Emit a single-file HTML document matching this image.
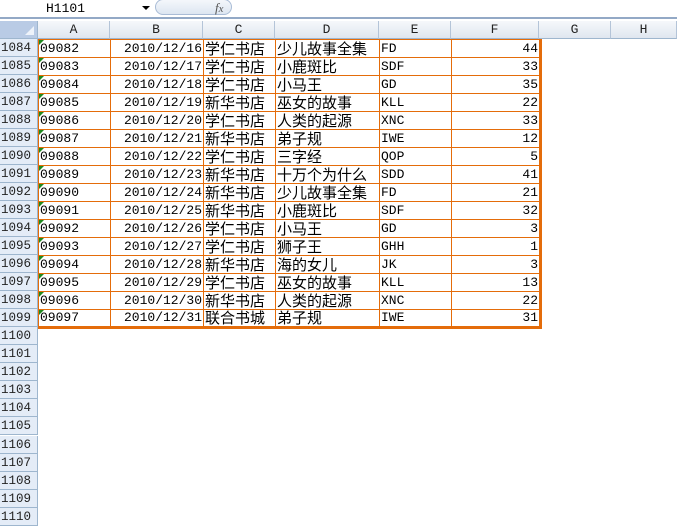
<!DOCTYPE html>
<html><head><meta charset="utf-8"><style>
*{margin:0;padding:0;box-sizing:border-box}
body{width:677px;height:524px;overflow:hidden;background:#fff;position:relative;font-family:"Liberation Mono","Noto Serif CJK SC",monospace;font-size:13px;color:#000}
.fb{position:absolute;left:0;top:0;width:677px;height:17px;background:#fff}
.nm{position:absolute;left:46px;top:1px;font-size:13px}
.arr{position:absolute;left:142px;top:6px;width:0;height:0;border-left:4px solid transparent;border-right:4px solid transparent;border-top:4px solid #000}
.pill{position:absolute;left:155px;top:-1px;width:77px;height:16px;border:1px solid #a9bcd6;border-radius:8px;background:linear-gradient(#f4f7fb,#dde6f1)}
.fx{position:absolute;left:215px;top:0px;font-family:"Liberation Serif",serif;font-style:italic;font-size:13px;color:#555}
.l1{position:absolute;left:0;top:17px;width:677px;height:2px;background:#93a9c6}
.hdr{position:absolute;top:21px;height:18px;background:linear-gradient(#f6f8fb,#dfe6ef);border-right:1px solid #b4c4d8;border-bottom:1px solid #9eb6ce;text-align:center;line-height:18px;color:#222}
.corner{position:absolute;left:0;top:21px;width:38px;height:18px;background:#b9cbe5;border-right:1px solid #9eb6ce;border-bottom:1px solid #9eb6ce}
.rh{position:absolute;left:0;width:38px;height:18px;background:#e4ecf7;border-right:1px solid #9eb6ce;border-bottom:1px solid #9eb6ce;font-size:12.5px;line-height:18px;color:#222;padding-left:1px}
table{position:absolute;left:38px;top:39px;border-collapse:collapse;table-layout:fixed}
td{height:18px;border:1px solid #e46c0a;line-height:16px;white-space:nowrap;overflow:hidden;padding:0 1px;vertical-align:middle}
td.c{font-size:15px;font-family:"Noto Sans CJK SC","Liberation Sans",sans-serif;line-height:16px}
td.r{text-align:right}
td.a{position:relative}
td.a:before{content:"";position:absolute;left:0;top:0;border-top:5px solid #1f8a1f;border-right:5px solid transparent}
tr td:last-child{border-right:3px solid #e46c0a}
tr:last-child td{border-bottom:3px solid #e46c0a}
</style></head><body>
<div class="fb"><span class="nm">H1101</span><div class="arr"></div><div class="pill"></div><span class="fx">f<small>x</small></span></div>
<div class="l1"></div>
<div class="corner"><div style="position:absolute;right:3px;bottom:3px;width:0;height:0;border-left:9px solid transparent;border-bottom:9px solid #eef3fa"></div></div>
<div class="hdr" style="left:38px;width:72px">A</div>
<div class="hdr" style="left:110px;width:93px">B</div>
<div class="hdr" style="left:203px;width:72px">C</div>
<div class="hdr" style="left:275px;width:104px">D</div>
<div class="hdr" style="left:379px;width:72px">E</div>
<div class="hdr" style="left:451px;width:88px">F</div>
<div class="hdr" style="left:539px;width:72px">G</div>
<div class="hdr" style="left:611px;width:66px">H</div>
<div class="rh" style="top:39px">1084</div><div class="rh" style="top:57px">1085</div><div class="rh" style="top:75px">1086</div><div class="rh" style="top:93px">1087</div><div class="rh" style="top:111px">1088</div><div class="rh" style="top:129px">1089</div><div class="rh" style="top:147px">1090</div><div class="rh" style="top:165px">1091</div><div class="rh" style="top:183px">1092</div><div class="rh" style="top:201px">1093</div><div class="rh" style="top:219px">1094</div><div class="rh" style="top:237px">1095</div><div class="rh" style="top:255px">1096</div><div class="rh" style="top:273px">1097</div><div class="rh" style="top:291px">1098</div><div class="rh" style="top:309px">1099</div><div class="rh" style="top:327px">1100</div><div class="rh" style="top:345px">1101</div><div class="rh" style="top:363px">1102</div><div class="rh" style="top:381px">1103</div><div class="rh" style="top:399px">1104</div><div class="rh" style="top:417px">1105</div><div class="rh" style="top:436px">1106</div><div class="rh" style="top:454px">1107</div><div class="rh" style="top:472px">1108</div><div class="rh" style="top:490px">1109</div><div class="rh" style="top:508px">1110</div>
<table>
<colgroup><col style="width:72px"><col style="width:93px"><col style="width:72px"><col style="width:104px"><col style="width:72px"><col style="width:89px"></colgroup>
<tr><td class="a">09082</td><td class="r">2010/12/16</td><td class="c">学仁书店</td><td class="c">少儿故事全集</td><td>FD</td><td class="r">44</td></tr>
<tr><td class="a">09083</td><td class="r">2010/12/17</td><td class="c">学仁书店</td><td class="c">小鹿斑比</td><td>SDF</td><td class="r">33</td></tr>
<tr><td class="a">09084</td><td class="r">2010/12/18</td><td class="c">学仁书店</td><td class="c">小马王</td><td>GD</td><td class="r">35</td></tr>
<tr><td class="a">09085</td><td class="r">2010/12/19</td><td class="c">新华书店</td><td class="c">巫女的故事</td><td>KLL</td><td class="r">22</td></tr>
<tr><td class="a">09086</td><td class="r">2010/12/20</td><td class="c">学仁书店</td><td class="c">人类的起源</td><td>XNC</td><td class="r">33</td></tr>
<tr><td class="a">09087</td><td class="r">2010/12/21</td><td class="c">新华书店</td><td class="c">弟子规</td><td>IWE</td><td class="r">12</td></tr>
<tr><td class="a">09088</td><td class="r">2010/12/22</td><td class="c">学仁书店</td><td class="c">三字经</td><td>QOP</td><td class="r">5</td></tr>
<tr><td class="a">09089</td><td class="r">2010/12/23</td><td class="c">新华书店</td><td class="c">十万个为什么</td><td>SDD</td><td class="r">41</td></tr>
<tr><td class="a">09090</td><td class="r">2010/12/24</td><td class="c">新华书店</td><td class="c">少儿故事全集</td><td>FD</td><td class="r">21</td></tr>
<tr><td class="a">09091</td><td class="r">2010/12/25</td><td class="c">新华书店</td><td class="c">小鹿斑比</td><td>SDF</td><td class="r">32</td></tr>
<tr><td class="a">09092</td><td class="r">2010/12/26</td><td class="c">学仁书店</td><td class="c">小马王</td><td>GD</td><td class="r">3</td></tr>
<tr><td class="a">09093</td><td class="r">2010/12/27</td><td class="c">学仁书店</td><td class="c">狮子王</td><td>GHH</td><td class="r">1</td></tr>
<tr><td class="a">09094</td><td class="r">2010/12/28</td><td class="c">新华书店</td><td class="c">海的女儿</td><td>JK</td><td class="r">3</td></tr>
<tr><td class="a">09095</td><td class="r">2010/12/29</td><td class="c">学仁书店</td><td class="c">巫女的故事</td><td>KLL</td><td class="r">13</td></tr>
<tr><td class="a">09096</td><td class="r">2010/12/30</td><td class="c">新华书店</td><td class="c">人类的起源</td><td>XNC</td><td class="r">22</td></tr>
<tr><td class="a">09097</td><td class="r">2010/12/31</td><td class="c">联合书城</td><td class="c">弟子规</td><td>IWE</td><td class="r">31</td></tr>
</table>
</body></html>
